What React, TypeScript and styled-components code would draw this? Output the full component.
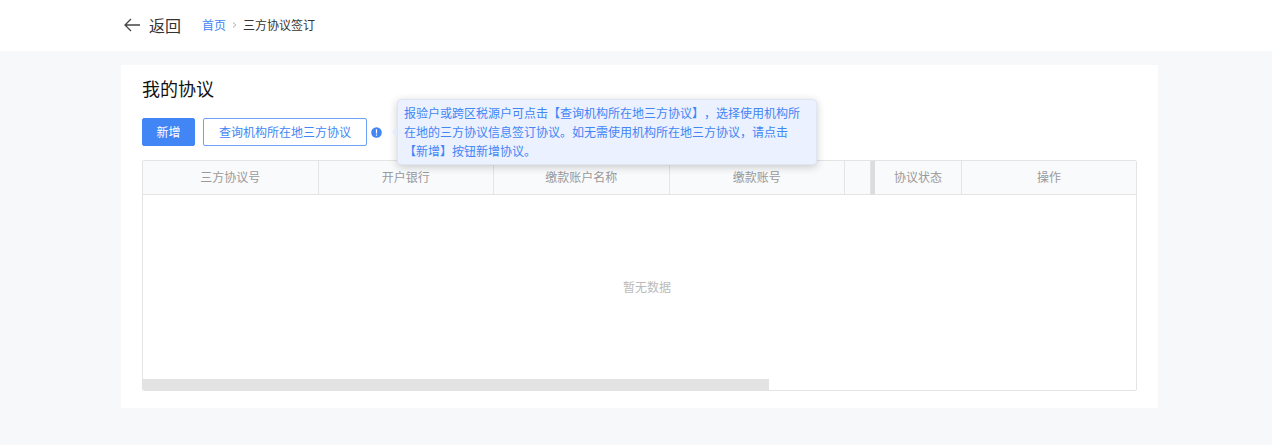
import React from "react";
import styled, { createGlobalStyle } from "styled-components";

const GlobalStyle = createGlobalStyle`
  *, *::before, *::after {
    box-sizing: border-box;
  }
  body {
    margin: 0;
    background: #f6f8fa;
    color: #333;
    font-family: "Noto Sans CJK SC", "Liberation Sans", sans-serif;
    font-size: 12px;
    line-height: 20px;
    text-spacing-trim: space-all;
  }
`;

const TopBar = styled.header`
  display: flex;
  align-items: center;
  gap: 21px;
  min-height: 51px;
  padding: 0 114px 2px 123px;
  background: #fff;
`;

const BackButton = styled.button`
  display: flex;
  align-items: center;
  gap: 8px;
  padding: 0;
  border: 0;
  background: none;
  color: #333;
  font: inherit;
  font-size: 16px;
  line-height: 24px;
  cursor: pointer;
`;

const Breadcrumb = styled.nav`
  display: flex;
  align-items: center;
  gap: 5px;
`;

const HomeLink = styled.a`
  color: #4285f5;
  text-decoration: none;
`;

const Page = styled.main`
  padding: 14px 114px 37px 121px;
`;

const Card = styled.section`
  padding: 11px 21px 17px;
  background: #fff;
`;

const Title = styled.h1`
  margin: 0;
  color: #111;
  font-size: 18px;
  font-weight: 400;
  line-height: 24px;
`;

const Toolbar = styled.div`
  display: flex;
  align-items: center;
  gap: 8px;
  margin: 18px 0 14px;
`;

const Button = styled.button<{ $primary?: boolean }>`
  min-width: ${(p) => (p.$primary ? "53px" : "164px")};
  height: 28px;
  padding: 0 12px;
  border: 1px solid ${(p) => (p.$primary ? "#4285f5" : "#6ea1f8")};
  border-radius: 2px;
  background: ${(p) => (p.$primary ? "#4285f5" : "#fff")};
  color: ${(p) => (p.$primary ? "#fff" : "#4285f5")};
  font: inherit;
  white-space: nowrap;
  cursor: pointer;
`;

const Hint = styled.div`
  position: relative;
  display: flex;
  margin-left: -4px;
`;

const Tooltip = styled.div`
  position: absolute;
  z-index: 1;
  bottom: -27px;
  left: 26px;
  width: 420px;
  padding: 3px 6px 4px;
  border: 1px solid #dfe5f1;
  border-radius: 4px;
  background: #ebf1fe;
  box-shadow: 0 2px 8px rgba(0, 0, 0, 0.2);
  color: #4285f5;
  line-height: 19px;

  &::before {
    content: "";
    position: absolute;
    top: 50%;
    left: -6px;
    margin-top: -5px;
    border: 5px solid transparent;
    border-left-width: 0;
    border-right-color: #e4ecfb;
  }
`;

const TableFrame = styled.div`
  border: 1px solid #e4e4e4;
  border-radius: 2px;
  overflow: hidden;
`;

const Table = styled.table`
  width: 100%;
  table-layout: fixed;
  border-collapse: separate;
  border-spacing: 0;
`;

const HeadCell = styled.th<{ $width?: number; $pinned?: boolean }>`
  width: ${(p) => (p.$width ? `${p.$width}px` : "auto")};
  height: 34px;
  padding: 0 0 2px;
  border-right: 1px solid #e4e4e4;
  border-bottom: 1px solid #e4e4e4;
  border-left: ${(p) => (p.$pinned ? "4px solid #dcdcdc" : "0")};
  background: #f9fafc;
  color: #999;
  font-weight: 400;
  text-align: center;

  &:last-child {
    border-right: 0;
  }
`;

const EmptyCell = styled.td`
  height: 184px;
  padding: 0 0 0 15px;
  color: #bbb;
  text-align: center;
`;

const ScrollThumb = styled.div`
  width: 63%;
  height: 11px;
  background: #e3e3e3;
`;

const columns: { title: string; width?: number; pinned?: boolean }[] = [
  { title: "三方协议号" },
  { title: "开户银行" },
  { title: "缴款账户名称" },
  { title: "缴款账号" },
  { title: "", width: 26 },
  { title: "协议状态", width: 91, pinned: true },
  { title: "操作", width: 174 },
];

const ArrowIcon = () => (
  <svg width="18" height="16" viewBox="0 0 18 16" fill="none" stroke="#444" strokeWidth="1.3" aria-hidden="true">
    <path d="M17 8H2M8 2L2 8l6 6" />
  </svg>
);

const ChevronIcon = () => (
  <svg width="7" height="8" viewBox="0 0 7 8" fill="none" stroke="#aaa" aria-hidden="true">
    <path d="M2 1.5L4.8 4 2 6.5" />
  </svg>
);

const InfoIcon = () => (
  <svg width="11" height="11" viewBox="0 0 11 11" aria-hidden="true">
    <circle cx="5.5" cy="5.5" r="5.3" fill="#4285f5" />
    <path d="M5.5 2.3v4.1M5.5 7.5v1.2" stroke="#fff" strokeWidth="1.2" />
  </svg>
);

export default function App() {
  return (
    <>
      <GlobalStyle />
      <TopBar>
        <BackButton type="button">
          <ArrowIcon />
          返回
        </BackButton>
        <Breadcrumb aria-label="breadcrumb">
          <HomeLink href="#">首页</HomeLink>
          <ChevronIcon />
          <span>三方协议签订</span>
        </Breadcrumb>
      </TopBar>
      <Page>
        <Card>
          <Title>我的协议</Title>
          <Toolbar>
            <Button type="button" $primary>新增</Button>
            <Button type="button" aria-describedby="query-hint">查询机构所在地三方协议</Button>
            <Hint>
              <InfoIcon />
              <Tooltip role="tooltip" id="query-hint">
                报验户或跨区税源户可点击【查询机构所在地三方协议】，选择使用机构所在地的三方协议信息签订协议。如无需使用机构所在地三方协议，请点击【新增】按钮新增协议。
              </Tooltip>
            </Hint>
          </Toolbar>
          <TableFrame>
            <Table>
              <thead>
                <tr>
                  {columns.map((c, i) => (
                    <HeadCell key={i} scope="col" $width={c.width} $pinned={c.pinned}>
                      {c.title}
                    </HeadCell>
                  ))}
                </tr>
              </thead>
              <tbody>
                <tr>
                  <EmptyCell colSpan={columns.length}>暂无数据</EmptyCell>
                </tr>
              </tbody>
            </Table>
            <ScrollThumb />
          </TableFrame>
        </Card>
      </Page>
    </>
  );
}
